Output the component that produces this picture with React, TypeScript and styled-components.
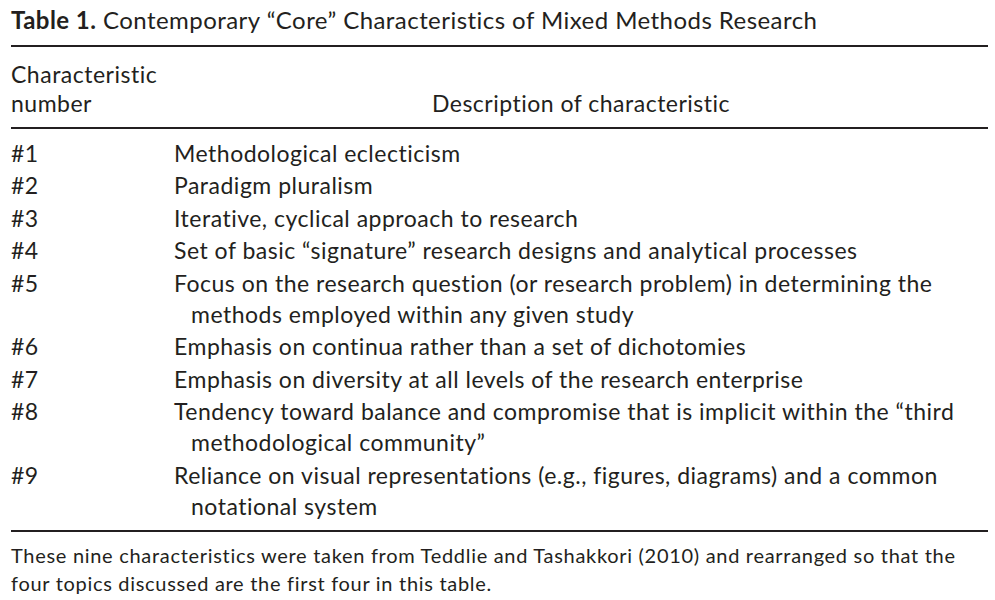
import styled, { createGlobalStyle } from 'styled-components';

const GlobalStyle = createGlobalStyle`
  html, body {
    margin: 0;
    padding: 0;
    background: #ffffff;
  }
  body {
    font-family: Lato, "Open Sans", sans-serif;
    color: #231f20;
  }
`;

const Page = styled.div`
  width: 995px;
  height: 600px;
  padding: 0 7px 0 11px;
  box-sizing: border-box;
  overflow: hidden;
`;

const Caption = styled.div`
  font-size: 24px;
  line-height: 28px;
  letter-spacing: 0.45px;
  padding-top: 6px;
  padding-bottom: 11px;
  border-bottom: 2px solid #231f20;
  white-space: nowrap;

  b {
    font-weight: 700;
  }
`;

const Grid = styled.div`
  display: grid;
  grid-template-columns: 163px 1fr;
`;

const HeadCell = styled.div<{ $center?: boolean }>`
  font-size: 23px;
  letter-spacing: 0.5px;
  line-height: 29px;
  padding: 13px 0 9px;
  border-bottom: 2px solid #231f20;
  display: flex;
  align-items: flex-end;
  justify-content: ${(p) => (p.$center ? 'center' : 'flex-start')};
`;

const Body = styled.div`
  padding: 8px 0 7px;
  border-bottom: 2px solid #231f20;
`;

const Row = styled.div`
  display: grid;
  grid-template-columns: 163px 1fr;
  font-size: 23px;
  letter-spacing: 0.5px;
  line-height: 31px;
  padding: 0.75px 0;
`;

const Line = styled.div<{ $indent?: boolean }>`
  white-space: nowrap;
  padding-left: ${(p) => (p.$indent ? '17px' : '0')};
`;

const Note = styled.div`
  font-size: 20px;
  letter-spacing: 0.7px;
  line-height: 28px;
  padding-top: 9px;
  white-space: nowrap;
`;

const rows: { num: string; lines: string[] }[] = [
  { num: '#1', lines: ['Methodological eclecticism'] },
  { num: '#2', lines: ['Paradigm pluralism'] },
  { num: '#3', lines: ['Iterative, cyclical approach to research'] },
  { num: '#4', lines: ['Set of basic \u201csignature\u201d research designs and analytical processes'] },
  {
    num: '#5',
    lines: [
      'Focus on the research question (or research problem) in determining the',
      'methods employed within any given study',
    ],
  },
  { num: '#6', lines: ['Emphasis on continua rather than a set of dichotomies'] },
  { num: '#7', lines: ['Emphasis on diversity at all levels of the research enterprise'] },
  {
    num: '#8',
    lines: [
      'Tendency toward balance and compromise that is implicit within the \u201cthird',
      'methodological community\u201d',
    ],
  },
  {
    num: '#9',
    lines: [
      'Reliance on visual representations (e.g., figures, diagrams) and a common',
      'notational system',
    ],
  },
];

export default function App() {
  return (
    <>
      <GlobalStyle />
      <Page>
        <Caption>
          <b>Table 1.</b> {'Contemporary \u201cCore\u201d Characteristics of Mixed Methods Research'}
        </Caption>
        <Grid>
          <HeadCell>
            Characteristic
            <br />
            number
          </HeadCell>
          <HeadCell $center>Description of characteristic</HeadCell>
        </Grid>
        <Body>
          {rows.map((r) => (
            <Row key={r.num}>
              <div>{r.num}</div>
              <div>
                {r.lines.map((l, i) => (
                  <Line key={i} $indent={i > 0}>
                    {l}
                  </Line>
                ))}
              </div>
            </Row>
          ))}
        </Body>
        <Note>
          These nine characteristics were taken from Teddlie and Tashakkori (2010) and rearranged so that the
          <br />
          four topics discussed are the first four in this table.
        </Note>
      </Page>
    </>
  );
}
